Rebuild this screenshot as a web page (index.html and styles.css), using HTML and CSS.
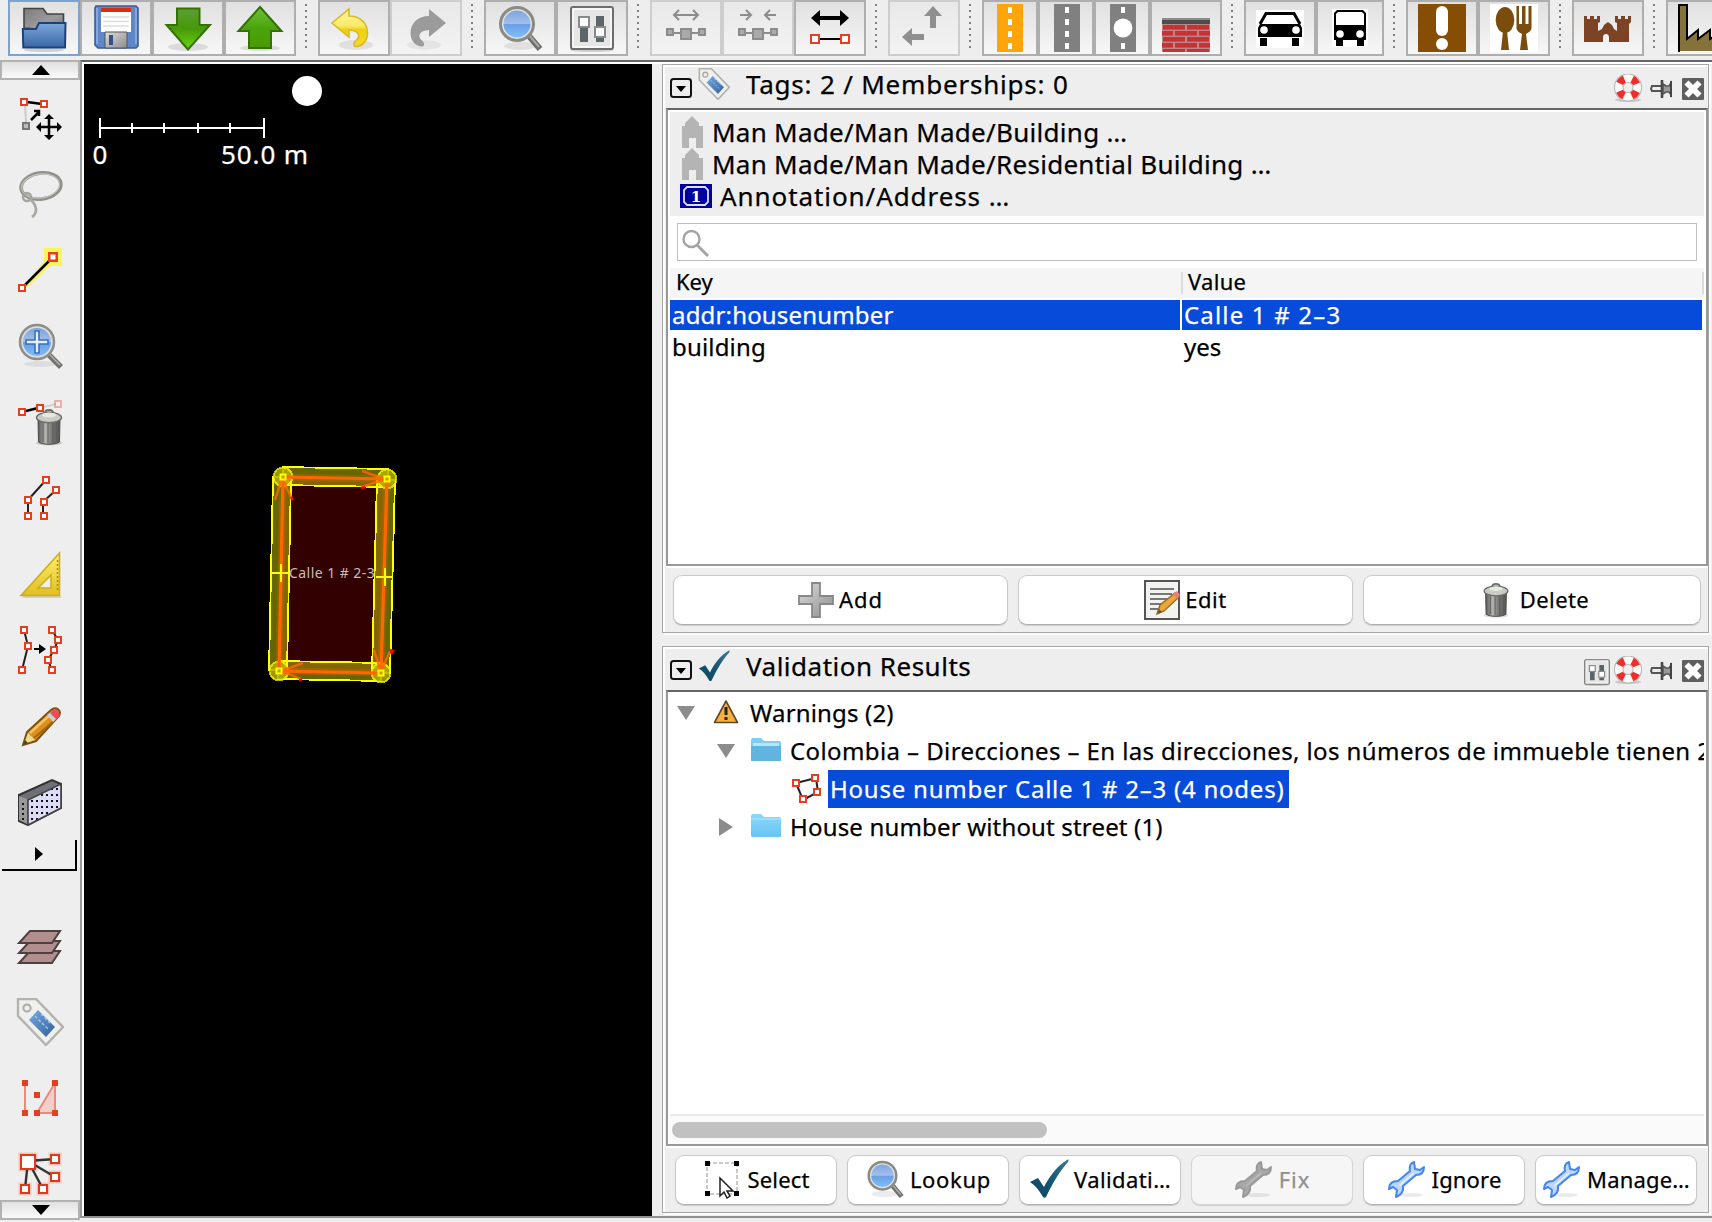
FILE: index.html
```html
<!DOCTYPE html>
<html lang="en">
<head>
<meta charset="utf-8">
<title>Map editor</title>
<link rel="stylesheet" href="styles.css">
</head>
<body>
<svg class="defs" aria-hidden="true">
  <defs>
    <linearGradient id="gBlue" x1="0" y1="0" x2="0" y2="1"><stop offset="0" stop-color="#7ba7da"/><stop offset="1" stop-color="#3a68a6"/></linearGradient>
    <linearGradient id="gGray" x1="0" y1="0" x2="1" y2="1"><stop offset="0" stop-color="#7c7c7c"/><stop offset=".6" stop-color="#9b9b9b"/><stop offset="1" stop-color="#757575"/></linearGradient>
    <linearGradient id="gDown" x1="0" y1="0" x2="0" y2="1"><stop offset="0" stop-color="#5d9e33"/><stop offset=".5" stop-color="#469a08"/><stop offset="1" stop-color="#6ad80e"/></linearGradient>
    <linearGradient id="gUp" x1="0" y1="0" x2="0" y2="1"><stop offset="0" stop-color="#6fc23c"/><stop offset=".5" stop-color="#4aa50d"/><stop offset="1" stop-color="#4b9903"/></linearGradient>
    <linearGradient id="gYel" x1="0" y1="0" x2="0" y2="1"><stop offset="0" stop-color="#fff7a0"/><stop offset=".45" stop-color="#fae96a"/><stop offset=".55" stop-color="#efd20c"/><stop offset="1" stop-color="#f0da30"/></linearGradient>
    <linearGradient id="gLens" x1="0" y1="0" x2="0" y2="1"><stop offset="0" stop-color="#7da4df"/><stop offset=".48" stop-color="#a3bfec"/><stop offset=".52" stop-color="#6a9fe6"/><stop offset="1" stop-color="#80bdfa"/></linearGradient>
    <linearGradient id="gBin" x1="0" y1="0" x2="1" y2="0"><stop offset="0" stop-color="#555"/><stop offset=".35" stop-color="#b5b5b2"/><stop offset=".6" stop-color="#7a7a78"/><stop offset="1" stop-color="#555"/></linearGradient>
    <linearGradient id="gRule" x1="0" y1="0" x2="0" y2="1"><stop offset="0" stop-color="#fff06a"/><stop offset="1" stop-color="#e0bf22"/></linearGradient>
    <linearGradient id="gFolder" x1="0" y1="0" x2="0" y2="1"><stop offset="0" stop-color="#8ad8fb"/><stop offset="1" stop-color="#68c4f3"/></linearGradient>
    <linearGradient id="gCheck" x1="1" y1="0" x2="0" y2="1"><stop offset="0" stop-color="#3b7b99"/><stop offset=".5" stop-color="#155672"/><stop offset="1" stop-color="#0b4560"/></linearGradient>
    <linearGradient id="gPlus" x1="0" y1="0" x2="1" y2="1"><stop offset="0" stop-color="#dcdcdc"/><stop offset="1" stop-color="#8d8d8d"/></linearGradient>
    <linearGradient id="gTag" x1="0" y1="0" x2="1" y2="1"><stop offset="0" stop-color="#76abe0"/><stop offset="1" stop-color="#33619c"/></linearGradient>
    <pattern id="pDots" width="5" height="6" patternUnits="userSpaceOnUse"><rect width="5" height="6" fill="#dcdcf6"/><rect x="1" y="2" width="2" height="2" fill="#111"/></pattern>
    <pattern id="pBrick" width="24" height="12" patternUnits="userSpaceOnUse" x="1162" y="24"><rect width="24" height="12" fill="#b88"/><rect x="1" y="1" width="22" height="4.6" fill="#c93234"/><rect x="-11" y="7" width="22" height="4.6" fill="#c93234"/><rect x="13" y="7" width="22" height="4.6" fill="#c93234"/></pattern>
  </defs>
  <symbol id="node" viewBox="0 0 8 8"><rect x="1" y="1" width="6" height="6" fill="#fff" stroke="#e2401f" stroke-width="2"/></symbol>
  <symbol id="mag" viewBox="0 0 48 48">
    <ellipse cx="24" cy="42" rx="16" ry="4" fill="#000" opacity=".08"/>
    <path d="M33 32l11 13" stroke="#6e6e6c" stroke-width="6"/><path d="M33 31l10 12" stroke="#a9a9a6" stroke-width="2"/>
    <circle cx="21" cy="20" r="16.5" fill="#e4e4de" stroke="#8a8a86" stroke-width="3"/><circle cx="21" cy="20" r="13.5" fill="url(#gLens)"/>
  </symbol>
  <symbol id="check" viewBox="0 0 40 40"><path d="M1 23l8-4 6 9C20 18 28 7 38 1c2-1 2 0 1 2C29 14 23 26 17 38c-1 1-2 1-3 0C10 31 6 26 1 23z" fill="url(#gCheck)"/></symbol>
  <symbol id="wrench" viewBox="0 0 40 40">
    <ellipse cx="24" cy="36" rx="12" ry="2" fill="#000" opacity=".08"/>
    <path d="M27 3l1 7 5 1 4-3c0 6-3 8-8 8L16 27c1 6-2 9-7 11l1-7-4-3-4 2c0-5 3-8 9-8l12-10c-1-4 0-8 4-9z" fill="var(--wf)" stroke="var(--ws)" stroke-width="2" stroke-linejoin="round"/>
    <path d="M12 27l15-13" stroke="var(--wl)" stroke-width="1.600"/>
  </symbol>
  <symbol id="tag" viewBox="0 0 48 48"><path d="M2 1h18l27 28L30 47 2 18z" fill="#efefec" stroke="#b2b2af" stroke-width="2.4"/><circle cx="11" cy="10" r="3.6" fill="#eee" stroke="#aaa" stroke-width="2"/><path d="M22 12l17 17-9 10-17-17z" fill="url(#gTag)"/><path d="M19 18l13 13M25 16l9 9" stroke="#a8c8ea" stroke-width="1.400" stroke-dasharray="3 2"/></symbol>
  <symbol id="bin" viewBox="0 0 28 38"><ellipse cx="14" cy="35" rx="13" ry="2.6" opacity=".15"/><path d="M3 11l.5 23c4 3 17 3 21 0l.5-23z" fill="url(#gBin)" stroke="#4c4c4a"/><path d="M8 14v20M13 15v20M18 15v20M22 14v19" stroke="#5b5b59" stroke-width="1"/><ellipse cx="14" cy="9.500" rx="12.500" ry="5.200" fill="#c9ccc5" stroke="#6c6e69" stroke-width="1.400"/><ellipse cx="14" cy="7" rx="7" ry="2.500" fill="#e6e8e2"/><path d="M10 5c0-4 8-4 8 0" fill="none" stroke="#6c6e69" stroke-width="2"/></symbol>
  <symbol id="buoy" viewBox="0 0 28 28"><ellipse cx="14" cy="26" rx="13" ry="2" opacity=".15"/><circle cx="14" cy="13.500" r="9.300" fill="none" stroke="#b5b5b0" stroke-width="9.500"/><circle cx="14" cy="13.500" r="9.300" fill="none" stroke="#fafafa" stroke-width="7.500"/><circle cx="14" cy="13.500" r="9.300" fill="none" stroke="#f02c2c" stroke-width="7.500" stroke-dasharray="6.500 8.100" stroke-dashoffset="-4.050"/></symbol>
  <symbol id="pin" viewBox="0 0 22 18"><path d="M11 6H2l-1 3 1 2h9" fill="#eee" stroke="#555" stroke-width="2"/><path d="M12 0v18" stroke="#444" stroke-width="2.600"/><path d="M13 4l3 2h3l2-3v12l-2-3h-3l-3 2z" fill="#999" stroke="#555" stroke-width="1.600"/><path d="M21 1v16" stroke="#444" stroke-width="2"/></symbol>
  <symbol id="close" viewBox="0 0 22 22"><rect width="22" height="22" rx="1" fill="#5f5f5f"/><path d="M6.500 6.500l9 9M15.500 6.500l-9 9" stroke="#fff" stroke-width="5.800" stroke-linecap="square"/></symbol>
  <symbol id="fold" viewBox="0 0 22 20"><rect x="1" y="1" width="20" height="18" rx="2.500" fill="none" stroke="#111" stroke-width="2"/><path d="M6 8h10l-5 6z"/></symbol>
  <symbol id="prefs" viewBox="0 0 48 48"><ellipse cx="24" cy="46" rx="22" ry="2" opacity=".15"/><rect x="3" y="3" width="42" height="42" rx="2" fill="#f6f6f6" stroke="#6c6e6a" stroke-width="2"/><rect x="6" y="6" width="36" height="36" fill="#e6e6e6"/><path d="M12 24h8v14h-8zM28 12h8v12h-8zM28 34h8v4h-8z" fill="#5c6668"/><rect x="11" y="13" width="10" height="10" fill="#fff" stroke="#8a8a8a" stroke-width="2"/><rect x="27" y="23" width="10" height="10" fill="#fff" stroke="#8a8a8a" stroke-width="2"/></symbol>
  <symbol id="house" viewBox="0 0 24 32"><path d="M12 0l7 7v3h4v22h-7V22H9v10H2V10h3V7z" fill="#b4b4b4"/></symbol>
</svg>

<header class="toolbar">
  <div class="tb active"><svg viewBox="20 4 48 48"><ellipse cx="44" cy="50" rx="20" ry="2" opacity=".15"/><path d="M24 28V8.500h19l4 5.500h16.500V24H40l-3 5z" fill="url(#gGray)" stroke="#444" stroke-width="1.600"/><path d="M22.800 29H36l3-6h26.500L65 47.500H23.300z" fill="url(#gBlue)" stroke="#1f4179" stroke-width="2"/></svg></div>
  <div class="tb"><svg viewBox="92 4 48 48"><path d="M96 6h40l2 2v38l-2 2H98l-3-3V8z" fill="#5f86c6" stroke="#3f5c96" stroke-width="1.600"/><path d="M97 8v36M136 8v36" stroke="#86a6dc" stroke-width="2"/><rect x="101" y="8" width="30" height="24" fill="#fff"/><rect x="101" y="8" width="30" height="4" fill="#e02a14"/><path d="M103 17h26M103 21.500h26M103 26h26" stroke="#ddd" stroke-width="1.600"/><path d="M105 32h22v16h-22z" fill="url(#gPlus)" stroke="#555"/><rect x="109" y="35" width="4" height="10" fill="#345086"/></svg></div>
  <div class="tb"><svg viewBox="164 4 48 48"><ellipse cx="188" cy="47" rx="20" ry="4" opacity=".1"/><path d="M177 8.500h22.500V25H210L188 49.500 166.500 25H177z" fill="url(#gDown)" stroke="#357005" stroke-width="2"/></svg></div>
  <div class="tb"><svg viewBox="236 4 48 48"><ellipse cx="260" cy="48" rx="20" ry="3" opacity=".1"/><path d="M260 7l21.500 24H271v17h-22V31h-10.500z" fill="url(#gUp)" stroke="#357005" stroke-width="2"/></svg></div>
  <i class="sep"></i>
  <div class="tb"><svg viewBox="330 4 48 48"><ellipse cx="356" cy="45" rx="17" ry="5" opacity=".08"/><path d="M332 23l17-14v7c12 0 18.500 8 18.500 17S361 47 355 46.500c-2-2-1-4 1-6 5-4 3-10-7-10.500v7z" fill="url(#gYel)" stroke="#d9b82a" stroke-width="1.600"/></svg></div>
  <div class="tb off"><svg viewBox="402 4 48 48"><ellipse cx="424" cy="45" rx="17" ry="5" opacity=".05"/><path d="M446 23L429 9v7c-12 0-18.500 8-18.500 17S417 47 423 46.500c2-2 1-4-1-6-5-4-3-10 7-10.500v7z" fill="#9b9b9b"/></svg></div>
  <i class="sep"></i>
  <div class="tb"><svg><use href="#mag"/></svg></div>
  <div class="tb"><svg><use href="#prefs"/></svg></div>
  <i class="sep"></i>
  <div class="tb off"><svg viewBox="662 4 48 48"><path d="M675 15h22M679 10l-5 5 5 5M693 10l5 5-5 5M674 33h24" fill="none" stroke="#8c8c8c" stroke-width="2"/><path d="M667 29h6v6h-6zM699 29h6v6h-6zM681 29h10v10h-10z" fill="#aaa" stroke="#8c8c8c" stroke-width="2"/></svg></div>
  <div class="tb off"><svg viewBox="662 4 48 48"><path d="M668 15h11M674 10l5 5-5 5M704 15h-11M698 10l-5 5 5 5M674 33h24" fill="none" stroke="#8c8c8c" stroke-width="2"/><path d="M667 29h6v6h-6zM699 29h6v6h-6zM681 29h10v10h-10z" fill="#aaa" stroke="#8c8c8c" stroke-width="2"/></svg></div>
  <div class="tb"><svg viewBox="806 4 48 48"><path d="M811 18l9-8v6h20v-6l9 8-9 8v-6h-20v6z"/><path d="M820 39h22" stroke="#000" stroke-width="2"/><path d="M811 35h8v8h-8zM841 35h8v8h-8z" fill="#fff" stroke="#e2401f" stroke-width="2"/></svg></div>
  <i class="sep"></i>
  <div class="tb off"><svg viewBox="900 4 48 48"><path d="M933 6l9 10h-6v12h-6V16h-6zM902 37l10-9v6h12v6h-12v6z" fill="#8f8f8f"/></svg></div>
  <i class="sep"></i>
  <div class="tb w56"><svg class="road" viewBox="998 4 26 48"><path d="M998 4h26v48h-26z" fill="#ffa50a"/><path d="M1011 7v6M1011 19v6M1011 31v6M1011 43v6" stroke="#fff" stroke-width="4"/></svg></div>
  <div class="tb w56"><svg class="road r2" viewBox="998 4 26 48"><path d="M998 4h26v48h-26z" fill="#808080"/><path d="M1011 7v6M1011 19v6M1011 31v6M1011 43v6" stroke="#fff" stroke-width="4"/></svg></div>
  <div class="tb w56"><svg class="road r2" viewBox="998 4 26 48"><path d="M998 4h26v48h-26z" fill="#808080"/><circle cx="1011" cy="28" r="9.400" fill="#fff"/><path d="M1011 7v6M1011 43v6" stroke="#fff" stroke-width="4"/></svg></div>
  <div class="tb"><svg viewBox="1162 4 48 48"><path d="M1162 18h48v2h-48z" fill="#8b8b8b"/><path d="M1162 20h48v4h-48z" fill="#4d4d4d"/><path d="M1162 24h48v28h-48z" fill="url(#pBrick)"/></svg></div>
  <i class="sep"></i>
  <div class="tb"><svg viewBox="1256 4 48 48"><path d="M1256 10h48v38h-48z" fill="#fff"/><path d="M1260 24l6-10.500h28l6 10.500" fill="#fff" stroke="#000" stroke-width="3"/><path d="M1260 24h40l2 4v9h-44v-9z"/><path d="M1260 38h7v8h-7zM1292 38h7v8h-7z"/><circle cx="1264" cy="30" r="3.800" fill="#fff"/><circle cx="1296" cy="30" r="3.800" fill="#fff"/></svg></div>
  <div class="tb w68"><svg viewBox="1326 4 48 48"><rect x="1332" y="9" width="36" height="38" fill="#fff"/><path d="M1337 10h26l3 3v27h-32V13z"/><path d="M1338 12h24l2 2v11h-28V14z" fill="#fff"/><path d="M1336 39h7v7h-7zM1357 39h7v7h-7z"/><circle cx="1340" cy="34" r="3.800" fill="#fff"/><circle cx="1360" cy="34" r="3.800" fill="#fff"/></svg></div>
  <i class="sep"></i>
  <div class="tb"><svg viewBox="1418 4 48 48"><path d="M1418 4h48v48h-48z" fill="#864d05"/><rect x="1436" y="6" width="12" height="30" rx="6" fill="#fff"/><circle cx="1442" cy="44" r="6" fill="#fff"/></svg></div>
  <div class="tb"><svg viewBox="1490 4 48 48"><path d="M1490 4h48v48h-48z" fill="#fff"/><g fill="#7a4d0c"><ellipse cx="1505" cy="20" rx="9.300" ry="13"/><path d="M1503 31h4l2 19h-8zM1516.500 6h2.500v18h3V6h3.500v18h3V6h3v22c0 3-4 5-5.500 6l2 16h-8l2-16c-2-1-5.500-3-5.500-6z"/></g></svg></div>
  <i class="sep"></i>
  <div class="tb"><svg viewBox="1584 4 48 48"><path d="M1584 16h3v3h3v-3h4v3h3v-3h3v6l-2 1v8l4-2 2-4 4-3 4 3 2 4 3 2v-8l-2-1v-6h3v3h3v-3h4v3h3v-3h3v6l-2 2v18h-20v-5c0-4-6-4-6 0v5h-19V24l-2-2z" fill="#7c4424"/></svg></div>
  <i class="sep"></i>
  <div class="tb"><svg viewBox="1678 4 48 48"><path d="M1679 5h8v34l11-9v9l12-9v9l14-9v21h-45z" fill="#85713a"/><path d="M1679 52V5h8v34l11-9v9l12-9v9l14-9" fill="none" stroke="#000" stroke-width="2"/></svg></div>
</header>

<div class="workspace">
  <nav class="sidebar">
    <div class="scroll up"><svg viewBox="0 0 18 10"><path d="M9 0l9 10H0z"/></svg></div>
    <div class="tool"><svg viewBox="16 94 48 48"><path d="M25 104l1 18" stroke="#ccc" stroke-width="2"/><path d="M27 102l15 2" stroke="#000" stroke-width="2.500"/><use href="#node" x="20" y="98" width="8" height="8"/><use href="#node" x="40" y="100" width="8" height="8"/><rect x="23" y="123" width="6" height="6" fill="#bbb" stroke="#777" stroke-width="2"/><path d="M31 120l8-8M34 111h5v5" fill="none" stroke="#000" stroke-width="2.500"/><path d="M39 127h20M49 117v20" stroke="#000" stroke-width="2.500"/><path d="M49 114l5 5h-10zM49 140l5-5h-10zM36 127l5-5v10zM62 127l-5-5v10z"/></svg></div>
    <div class="tool"><svg viewBox="16 170 48 48"><ellipse cx="41" cy="186" rx="20" ry="13" transform="rotate(-8 41 186)" fill="none" stroke="#91918c" stroke-width="3.600"/><ellipse cx="40.500" cy="186" rx="19" ry="12" transform="rotate(-8 41 186)" fill="none" stroke="#c4c4bf" stroke-width="1.200"/><circle cx="27" cy="197" r="4" fill="none" stroke="#a5a5a0" stroke-width="2.500"/><path d="M30 199c7 6 8 14 2 18" fill="none" stroke="#a9a9a4" stroke-width="2.800"/></svg></div>
    <div class="tool"><svg viewBox="16 246 48 48"><path d="M25 284l20-24h10l-3 4-25 24z" fill="#f8f06a"/><rect x="44" y="248" width="18" height="18" fill="#f9f35c"/><path d="M25 285l27-27" stroke="#000" stroke-width="2.500"/><use href="#node" x="18" y="284" width="8" height="8"/><use href="#node" x="48" y="252" width="10" height="10"/></svg></div>
    <div class="tool"><svg viewBox="16 322 48 48"><ellipse cx="40" cy="364" rx="16" ry="3" opacity=".07"/><path d="M49 355l12 12" stroke="#70706e" stroke-width="5.500"/><path d="M49 354l11 11" stroke="#b0b0ad" stroke-width="1.600"/><circle cx="37" cy="342" r="17" fill="#deded9" stroke="#8d8d89" stroke-width="2.500"/><circle cx="37" cy="342" r="14" fill="url(#gLens)"/><path d="M35 331h4v9h9v4h-9v9h-4v-9h-9v-4h9z" fill="#e6f0fc" stroke="#3a6fb8" stroke-width="1.600"/></svg></div>
    <div class="tool"><svg viewBox="16 398 48 48"><path d="M26 411l12-3" stroke="#000" stroke-width="2.500"/><path d="M44 407l12-3" stroke="#ccc" stroke-width="1.500"/><use href="#bin" x="35" y="408" width="28" height="38"/><use href="#node" x="18" y="408" width="8" height="8"/><use href="#node" x="36" y="404" width="8" height="8"/><use href="#node" x="54" y="400" width="8" height="8" opacity=".35"/></svg></div>
    <div class="tool"><svg viewBox="16 474 48 48"><path d="M46 480L28 500v16M56 490L43 502v14" fill="none" stroke="#222" stroke-width="2"/><use href="#node" x="42" y="476" width="8" height="8"/><use href="#node" x="24" y="496" width="8" height="8"/><use href="#node" x="24" y="512" width="8" height="8"/><use href="#node" x="52" y="486" width="8" height="8"/><use href="#node" x="40" y="498" width="8" height="8"/><use href="#node" x="40" y="512" width="8" height="8"/></svg></div>
    <div class="tool"><svg viewBox="16 550 48 48"><ellipse cx="42" cy="597" rx="20" ry="2" opacity=".12"/><path d="M59.500 553v42.500H21zM51 575v13H38z" fill="url(#gRule)" fill-rule="evenodd" stroke="#cfae1c" stroke-width="1.600"/><path d="M57.500 560v32" stroke="#a88a10" stroke-width="1.500" stroke-dasharray="2 2"/></svg></div>
    <div class="tool"><svg viewBox="16 626 48 48"><path d="M24 630l4 16-6 24M52 630l6 10-4 10-6 10 4 10" fill="none" stroke="#222" stroke-width="2"/><path d="M34 649h7" stroke="#000" stroke-width="2"/><path d="M39 644l7 5-7 5z"/><use href="#node" x="20" y="626" width="8" height="8"/><use href="#node" x="24" y="642" width="8" height="8"/><use href="#node" x="18" y="666" width="8" height="8"/><use href="#node" x="48" y="626" width="8" height="8"/><use href="#node" x="54" y="636" width="8" height="8"/><use href="#node" x="50" y="646" width="8" height="8"/><use href="#node" x="44" y="656" width="8" height="8"/><use href="#node" x="48" y="666" width="8" height="8"/></svg></div>
    <div class="tool"><svg viewBox="16 702 48 48"><path d="M23 745l4-13 24-22c5-4 11 0 8 6L36 741z" fill="#d99020" stroke="#7b5110" stroke-width="2"/><path d="M30 733l22-20" stroke="#f6c25a" stroke-width="2.500"/><path d="M34 738l22-19" stroke="#a8670f" stroke-width="2"/><path d="M24 744l4-11 7 7z" fill="#eeda90"/><path d="M23 745l2-5 3 3z" fill="#443"/><path d="M47 715l5-4 6 6-5 5z" fill="#ccc"/><path d="M52 711c4-3 9 1 7 6l-3 2-6-6z" fill="#ec4a5a"/></svg></div>
    <div class="tool"><svg viewBox="16 778 48 48"><path d="M19 795l33-15 9 4v24l-33 17-9-4z" fill="#6f6f76" stroke="#333" stroke-width="2"/><path d="M28 800l33-16v24l-33 17z" fill="url(#pDots)" stroke="#444" stroke-width="1.600"/><path d="M19 796l8 3v25l-8-4z" fill="#999"/><path d="M23 803v18" stroke="#111" stroke-width="2" stroke-dasharray="2 3"/></svg></div>
    <div class="more"><svg viewBox="0 0 8 14"><path d="M0 0l8 7-8 7z"/></svg></div>
    <div class="tool"><svg viewBox="16 922 48 48"><g fill="#b28e8e" stroke="#4c4040" stroke-width="2"><path d="M30 951h30l-8 12H19z"/><path d="M30 941h30l-8 12H19z"/><path d="M30 931h30l-8 12H19z"/></g></svg></div>
    <div class="tool"><svg><use href="#tag"/></svg></div>
    <div class="tool"><svg viewBox="16 1074 48 48"><path d="M25 1083v30M55 1083v30H37z" fill="#f0cfca" stroke="#e88a78" stroke-width="2"/><path d="M22 1080h6v6h-6zM52 1080h6v6h-6zM34 1092h6v6h-6zM22 1110h6v6h-6zM34 1110h6v6h-6zM52 1110h6v6h-6z" fill="#e2401f"/></svg></div>
    <div class="tool last"><svg viewBox="16 1150 48 48"><g fill="#fff" stroke="#f3c4ba" stroke-width="5"><path d="M51 1155h8v8h-8zM51 1173h8v8h-8zM21 1185h8v8h-8zM39 1185h8v8h-8zM21 1155h14v14H21z"/></g><path d="M55 1159l-27 2 27 16M25 1189l3-28 15 28" fill="none" stroke="#333" stroke-width="2.400"/><g fill="#fff" stroke="#dd3a1b" stroke-width="2"><path d="M51 1155h8v8h-8zM51 1173h8v8h-8zM21 1185h8v8h-8zM39 1185h8v8h-8zM21 1155h14v14H21z"/></g></svg></div>
    <div class="scroll down"><svg viewBox="0 0 18 10"><path d="M0 0h18l-9 10z"/></svg></div>
  </nav>

  <main class="content">
    <svg class="map" viewBox="84 64 568 1152">
      <path d="M100 128h164M100 118v20M264 118v20M132 123v10M164 123v10M198 123v10M230 123v10" stroke="#fff" stroke-width="2" shape-rendering="crispEdges"/>
      <circle cx="307" cy="91" r="15" fill="#fff"/>
      <text class="scale" x="92.500" y="164">0</text><text class="scale fifty" x="221" y="164">50.0 m</text>
      <path d="M283 477L387 479 381 673 279 671z" fill="#330000"/>
      <g fill="#ff0" fill-opacity=".4" stroke="#ff0" stroke-width="1.800" shape-rendering="crispEdges">
        <path d="M273 477l18 1-4 193-18-1z"/>
        <path d="M377 479l18 1-5 193-18-1z"/>
        <path d="M283 467l105 2-1 18-105-2z"/>
        <path d="M279 661l103 2-1 18-103-2z"/>
      </g>
      <g fill="#b5b000" stroke="#ff0" stroke-width="1.800" fill-opacity=".85" stroke-opacity=".7" shape-rendering="crispEdges"><circle cx="283" cy="477" r="9.500"/><circle cx="387" cy="479" r="9.500"/><circle cx="381" cy="673" r="9.500"/><circle cx="279" cy="671" r="9.500"/></g>
      <path d="M283 477L387 479 381 673 279 671z" fill="none" stroke="#ff6a00" stroke-opacity=".22" stroke-width="7"/>
      <path d="M283 477L387 479 381 673 279 671z" fill="none" stroke="#ff6600" stroke-width="3.200"/>
      <path d="M362 471l23 8-23 8M275 500l7-22 10 21M374 650l7 22 9-21M303 663l-22 8 20 8" fill="none" stroke="#ff6600" stroke-opacity=".85" stroke-width="2.400"/>
      <path d="M390 650l3 1-2 3M291 497l2 3M361 488l4-1M299 680l3 0" stroke="#f00" stroke-width="2.500"/>
      <path d="M272 573h17M281 564v18M376 577h17M385 568v18" stroke="#ff0" stroke-width="2" shape-rendering="crispEdges"/>
      <path d="M280.500 474.500h5v5h-5zM384.500 476.500h5v5h-5zM378.500 670.500h5v5h-5zM276.500 668.500h5v5h-5z" fill="#c90" stroke="#ff0" stroke-width="2"/>
      <text class="label" x="289" y="577.500">Calle 1 # 2-3</text>
    </svg>

    <aside class="dock">
      <section class="panel tags">
        <div class="head"><svg class="i-fold"><use href="#fold"/></svg><svg class="i-head"><use href="#tag"/></svg><h2 class="t-tags">Tags: 2 / Memberships: 0</h2><svg class="i-buoy"><use href="#buoy"/></svg><svg class="i-pin"><use href="#pin"/></svg><svg class="i-close"><use href="#close"/></svg></div>
        <div class="box">
          <ul class="presets">
            <li><svg class="i-house"><use href="#house"/></svg><span class="p1">Man Made/Man Made/Building …</span></li>
            <li><svg class="i-house"><use href="#house"/></svg><span class="p1">Man Made/Man Made/Residential Building …</span></li>
            <li><svg class="i-addr" viewBox="0 0 32 24"><rect width="32" height="24" fill="#00009c"/><path d="M7 3h18l3 3v12l-3 3H7l-3-3V6z" fill="none" stroke="#dde" stroke-width="1.800"/><text class="one" x="16" y="17.500" text-anchor="middle">1</text></svg><span class="ls10">Annotation/Address …</span></li>
          </ul>
          <div class="search"><svg viewBox="0 0 30 30"><circle cx="10.500" cy="11" r="8" fill="none" stroke="#a4a4a4" stroke-width="2.400"/><path d="M16 17l11 11" stroke="#a4a4a4" stroke-width="3"/></svg></div>
          <div class="thead"><span>Key</span><span class="val">Value</span></div>
          <div class="trow sel"><span class="c1 ls2">addr:housenumber</span><span class="c2 ls12">Calle 1 # 2–3</span></div>
          <div class="trow"><span class="c1 ls2">building</span><span class="c2">yes</span></div>
        </div>
        <div class="buttons three">
          <button class="ls10"><svg class="b36" viewBox="0 0 36 36"><path d="M14 1h8v13h13v8H22v13h-8V22H1v-8h13z" fill="url(#gPlus)" stroke="#888" stroke-width="1.800"/></svg><span>Add</span></button>
          <button class="ls5"><svg class="b36 tall" viewBox="0 0 36 40"><path d="M1 1h34v38H1z" fill="#f2f2f0" stroke="#555" stroke-width="2"/><path d="M6 9h24M6 14h22M6 19h18M6 24h14M6 29h8" stroke="#777" stroke-width="2.200"/><path d="M13 34l3-9 15-12 4 4-15 14z" fill="#e9a93a" stroke="#9b6c1c" stroke-width="1.400"/><path d="M29 14l4-3 3 4-3 4z" fill="#f37a7a"/><path d="M13 34l2-5 3 3z" fill="#654"/></svg><span>Edit</span></button>
          <button class="ls4 del"><svg class="b36"><use href="#bin"/></svg><span>Delete</span></button>
        </div>
      </section>

      <section class="panel results">
        <div class="head"><svg class="i-fold"><use href="#fold"/></svg><svg class="i-head"><use href="#check"/></svg><h2 class="ls5">Validation Results</h2><svg class="i-prefs"><use href="#prefs"/></svg><svg class="i-buoy"><use href="#buoy"/></svg><svg class="i-pin"><use href="#pin"/></svg><svg class="i-close"><use href="#close"/></svg></div>
        <div class="box">
          <div class="tree">
            <div class="node l1"><svg class="a" viewBox="0 0 18 18"><path d="M0 2h18L9 16z" fill="#8c8c8c"/></svg><svg class="warn" viewBox="0 0 26 24"><path d="M13 1l11.500 21.500h-23z" fill="#f6b03c" stroke="#5a4a2a" stroke-width="1.600" stroke-linejoin="round"/><path d="M13 7v8M13 17v3" stroke="#222" stroke-width="3"/></svg><span class="t ls2">Warnings (2)</span></div>
            <div class="node l2"><svg class="a" viewBox="0 0 18 18"><path d="M0 2h18L9 16z" fill="#8c8c8c"/></svg><svg class="fold" viewBox="0 0 32 26"><path d="M1 3l1-2h9l3 3h16l1 2v18H1z" fill="#7fcdf3"/><path d="M3 6h26v3H3z" fill="#b5e6fb"/><path d="M1 9h30v14l-1 1H2l-1-1z" fill="#61b4dd"/></svg><span class="t ls4">Colombia – Direcciones – En las direcciones, los números de immueble tienen 2</span></div>
            <div class="node l3"><svg class="way" viewBox="0 0 32 30"><path d="M5 9l20-5 2 14-15 8z" fill="none" stroke="#222" stroke-width="2"/><use href="#node" x="1" y="5" width="8" height="8"/><use href="#node" x="20" y="0" width="8" height="8"/><use href="#node" x="22" y="14" width="8" height="8"/><use href="#node" x="8" y="21" width="8" height="8"/></svg><span class="t picked">House number Calle 1 # 2–3 (4 nodes)</span></div>
            <div class="node l2"><svg class="a" viewBox="0 0 18 18"><path d="M2 0v18l14-9z" fill="#8c8c8c"/></svg><svg class="fold" viewBox="0 0 32 26"><path d="M1 3l1-2h9l3 3h16l1 2v17l-1 1H2l-1-1z" fill="url(#gFolder)"/><path d="M1 6h30" stroke="#a9e2fb" stroke-width="1.500"/></svg><span class="t ls2">House number without street (1)</span></div>
          </div>
          <div class="hscroll"><i></i></div>
        </div>
        <div class="buttons six">
          <button class="ls2"><svg class="b40" viewBox="0 0 40 40"><rect x="5" y="4" width="30" height="31" fill="none" stroke="#bbb" stroke-width="1.600" stroke-dasharray="4 2"/><path d="M3 2h5v5H3zM32 2h5v5h-5zM3 32h5v5H3zM32 32h5v5h-5z"/><path d="M18 19v18l4-4 3 6 3-2-3-5h6z" fill="#fff" stroke="#222" stroke-width="1.500"/></svg><span>Select</span></button>
          <button class="ls7"><svg class="b40"><use href="#mag"/></svg><span>Lookup</span></button>
          <button class="ls4"><svg class="b40"><use href="#check"/></svg><span>Validati…</span></button>
          <button class="ls10 dis"><svg class="b40 gray"><use href="#wrench"/></svg><span>Fix</span></button>
          <button class="ls2"><svg class="b40 blue"><use href="#wrench"/></svg><span>Ignore</span></button>
          <button class="ls2"><svg class="b40 blue"><use href="#wrench"/></svg><span>Manage…</span></button>
        </div>
      </section>
    </aside>
  </main>
</div>
</body>
</html>
```

FILE: styles.css
```css
* { box-sizing: border-box; }
body { margin: 0; width: 1712px; height: 1222px; overflow: hidden; background: #eee; color: #000; font: 24px "Noto Sans", "Open Sans", sans-serif; -webkit-text-stroke: .25px; }
svg { display: block; flex: none; }
.defs { position: absolute; width: 0; height: 0; }

.toolbar { display: flex; height: 60px; padding-left: 8px; overflow: hidden; }
.tb { flex: none; width: 72px; height: 56px; border: 2px solid #aeaeae; background: linear-gradient(#e0e0e0, #f7f7f7); display: flex; align-items: center; justify-content: center; }
.tb svg { width: 48px; height: 48px; }
.tb svg.road { width: 26px; }
.tb svg.r2 { margin-left: 2px; }
.tb.w56 { width: 56px; }
.tb.w68 { width: 68px; }
.tb.active { border-color: #7aa3d2; }
.tb.off { border-color: #cdcdcd; background: linear-gradient(#e8e8e8, #f3f3f3); }
.sep { flex: none; width: 22px; height: 48px; background: repeating-linear-gradient(#808080 0 2px, transparent 2px 6px) 9px 4px / 2px 44px no-repeat; }

.workspace { display: flex; height: 1162px; }
.sidebar { width: 80px; display: flex; flex-direction: column; }
.scroll { height: 20px; border: 2px solid #b2b2b2; background: linear-gradient(#e0e0e0, #fafafa); display: flex; align-items: center; justify-content: center; }
.scroll svg { width: 18px; height: 10px; margin-left: 2px; }
.tool { height: 76px; padding: 14px 0 0 16px; }
.tool svg { width: 48px; height: 48px; }
.tool.last { height: 64px; }
.more { width: 75px; height: 31px; margin: 0 0 37px 2px; border: solid #000; border-width: 0 2px 2px 0; padding: 7px 0 0 33px; }
.more svg { width: 8px; height: 14px; }

.content { flex: 1; height: 1158px; display: flex; border: solid #666; border-width: 2px 0 2px 2px; border-left-color: #999; border-bottom-color: #909090; padding: 2px 0 0 2px; background: #fff; }
.map { width: 568px; height: 1152px; background: #000; }
.scale { font-size: 26px; fill: #fff; stroke: #fff; stroke-width: .25px; }
.fifty { letter-spacing: .9px; }
.label { font-size: 14px; fill: #c9bcbc; letter-spacing: .45px; }

.dock { flex: 1; height: 1152px; background: #eee; padding-left: 10px; display: flex; flex-direction: column; gap: 13px; }
.panel { width: 1047px; border: 1px solid #a6a6a6; box-shadow: inset 2px 2px 0 #fff, 2px 2px 0 #fbfbfb; padding-left: 3px; display: flex; flex-direction: column; }
.tags { height: 569px; }
.results { height: 567px; }
.head { height: 43px; padding: 4px 4px 0 4px; display: flex; align-items: flex-start; }
.head h2 { margin: 0 auto 0 16px; font-size: 26px; line-height: 30px; font-weight: 400; }
.head .t-tags { letter-spacing: .8px; }
.i-fold { width: 22px; height: 20px; margin-top: 9px; }
.i-head { width: 32px; height: 32px; margin-left: 6px; margin-top: -1px; }
.i-prefs { width: 28px; height: 28px; margin: 7px 3px 0 0; }
.i-buoy { width: 28px; height: 28px; margin-top: 5px; }
.i-pin { width: 22px; height: 18px; margin: 11px 10px 0 8px; }
.i-close { width: 22px; height: 22px; margin: 9px 0 0; }
.box { background: #fff; border: 2px solid #999; border-top-color: #666; display: flex; flex-direction: column; box-shadow: 0 2px 0 #fff; }
.tags .box { height: 458px; padding: 2px; }
.results .box { height: 456px; }

.presets { list-style: none; margin: 0; padding: 4px 0 4px 10px; height: 104px; background: #eee; font-size: 26px; }
.presets li { display: flex; align-items: center; height: 32px; line-height: 32px; white-space: nowrap; }
.i-house { width: 24px; height: 32px; margin-right: 8px; }
.p1 { letter-spacing: .28px; }
.i-addr { width: 32px; height: 24px; margin-right: 8px; }
.one { font: bold 15px "DejaVu Serif", serif; fill: #fff; }
.search { margin: 7px 7px 7px; height: 38px; border: 1px solid #bebebe; padding: 4px 3px; }
.search svg { width: 30px; height: 30px; }
.thead { height: 30px; margin-bottom: 2px; background: #f5f5f5; font-size: 22px; line-height: 27px; display: flex; padding-left: 6px; }
.thead span { width: 505px; }
.thead .val { width: 523px; margin: 4px 0; line-height: 19px; height: 22px; padding-left: 5px; border: solid #dcdcdc; border-width: 0 2px 0 2px; letter-spacing: .3px; }
.trow { display: flex; height: 30px; line-height: 29px; margin-bottom: 2px; }
.c1 { width: 510px; padding-left: 2px; margin-right: 2px; }
.c2 { width: 520px; padding-left: 2px; }
.sel span { background: #074bdb; color: #fff; }

.buttons { display: flex; }
.three { gap: 10px; padding: 9px 7px 0 7px; }
.six { gap: 10px; padding: 9px 11px 0 9px; }
button { flex: 1; min-width: 0; height: 50px; margin: 0; padding: 0; border: 1px solid #c9c9c9; border-bottom-color: #b0b0b0; border-radius: 9px; background: #fff; box-shadow: 0 1px 1px rgba(0,0,0,.15); font: 22px "Noto Sans", sans-serif; color: #000; display: flex; align-items: center; justify-content: center; gap: 5px; white-space: nowrap; -webkit-text-stroke: .25px; }
button span { line-height: 30px; margin-top: -2px; }
button.dis { background: #f6f6f6; color: #909090; border-color: #d8d8d8; }
.b36 { width: 36px; height: 36px; }
.del { gap: 6px; padding-left: 3px; }
.b36.tall { height: 40px; }
.b40 { width: 40px; height: 40px; margin-top: -2px; }
.blue { --wf: #bfd6fb; --ws: #4286ee; --wl: #e8f1ff; }
.gray { --wf: #a8a8a8; --ws: #999; --wl: #bbb; }

.tree { height: 422px; padding: 2px 2px 0 2px; overflow: hidden; }
.node { display: flex; align-items: center; height: 38px; white-space: nowrap; width: 1034px; overflow: hidden; }
.l1 { padding-left: 7px; }
.l2 { padding-left: 47px; }
.l3 { padding-left: 121px; }
.a { width: 18px; height: 18px; margin-right: 18px; }
.warn { width: 26px; height: 24px; margin: -3px 11px 0 0; }
.l2 .a { margin-right: 15px; }
.fold { width: 32px; height: 26px; margin-right: 8px; margin-top: -2px; }
.way { width: 32px; height: 30px; margin-right: 5px; }
.t { line-height: 37px; height: 38px; }
.picked { background: #074bdb; color: #fff; padding: 0 5px 0 2px; letter-spacing: .77px; }
.hscroll { height: 30px; margin: 0 2px; border-top: 2px solid #e8e8e8; background: #fafafa; padding: 6px 2px 0; }
.hscroll i { display: block; width: 375px; height: 16px; border-radius: 8px; background: #c1c1c1; }

.ls2 { letter-spacing: .17px; }
.ls4 { letter-spacing: .4px; }
.ls5 { letter-spacing: .5px; }
.ls7 { letter-spacing: .7px; }
.ls10 { letter-spacing: .92px; }
.ls12 { letter-spacing: 1.18px; }
```
